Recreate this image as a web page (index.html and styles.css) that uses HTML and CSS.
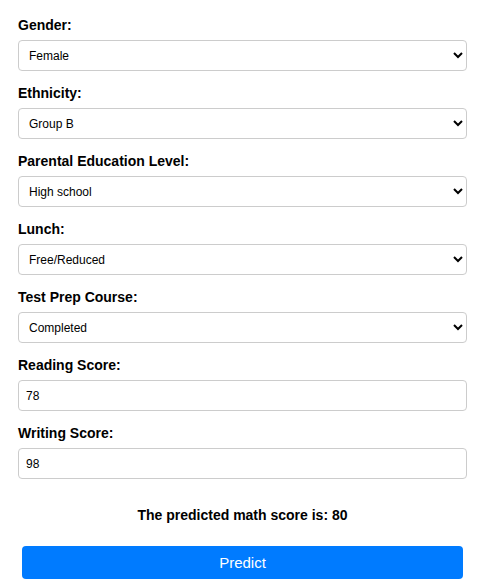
FILE: index.html
```html
<!DOCTYPE html>
<html>
<head>
<meta charset="utf-8">
<link rel="stylesheet" href="styles.css">
</head>
<body>
<form class="form">
  <div class="group">
    <label class="label">Gender:</label>
    <select class="field select"><option>Female</option></select>
  </div>
  <div class="group">
    <label class="label">Ethnicity:</label>
    <select class="field select"><option>Group B</option></select>
  </div>
  <div class="group">
    <label class="label">Parental Education Level:</label>
    <select class="field select"><option>High school</option></select>
  </div>
  <div class="group">
    <label class="label">Lunch:</label>
    <select class="field select"><option>Free/Reduced</option></select>
  </div>
  <div class="group">
    <label class="label">Test Prep Course:</label>
    <select class="field select"><option>Completed</option></select>
  </div>
  <div class="group">
    <label class="label">Reading Score:</label>
    <input class="field input" type="text" value="78">
  </div>
  <div class="group">
    <label class="label">Writing Score:</label>
    <input class="field input" type="text" value="98">
  </div>
  <p class="result">The predicted math score is: 80</p>
  <button class="button" type="button">Predict</button>
</form>
</body>
</html>
```
FILE: styles.css
```css
html, body {
  margin: 0;
  padding: 0;
  background: #fff;
  font-family: "Liberation Sans", Arial, sans-serif;
  color: #000;
}
.form {
  padding: 17px 14px 0 18px;
}
.group {
  margin-bottom: 14px;
}
.label {
  display: block;
  font-size: 14px;
  font-weight: bold;
  line-height: 16px;
  margin-bottom: 7px;
}
.field {
  display: block;
  box-sizing: border-box;
  width: 449px;
  height: 31px;
  border: 1px solid #ccc;
  border-radius: 4px;
  background: #fff;
  font-family: "Liberation Sans", Arial, sans-serif;
  font-size: 12px;
  color: #000;
  margin: 0;
}
.select {
  padding: 0 6px;
}
.input {
  padding: 0 7px;
}
.result {
  margin: 28px 0 0 0;
  text-align: center;
  font-size: 14px;
  font-weight: bold;
  line-height: 16px;
}
.button {
  display: block;
  box-sizing: border-box;
  width: 441px;
  height: 33px;
  margin: 23px 0 0 4px;
  border: none;
  border-radius: 4px;
  background: #007bff;
  color: #fff;
  font-family: "Liberation Sans", Arial, sans-serif;
  font-size: 15px;
}
```
